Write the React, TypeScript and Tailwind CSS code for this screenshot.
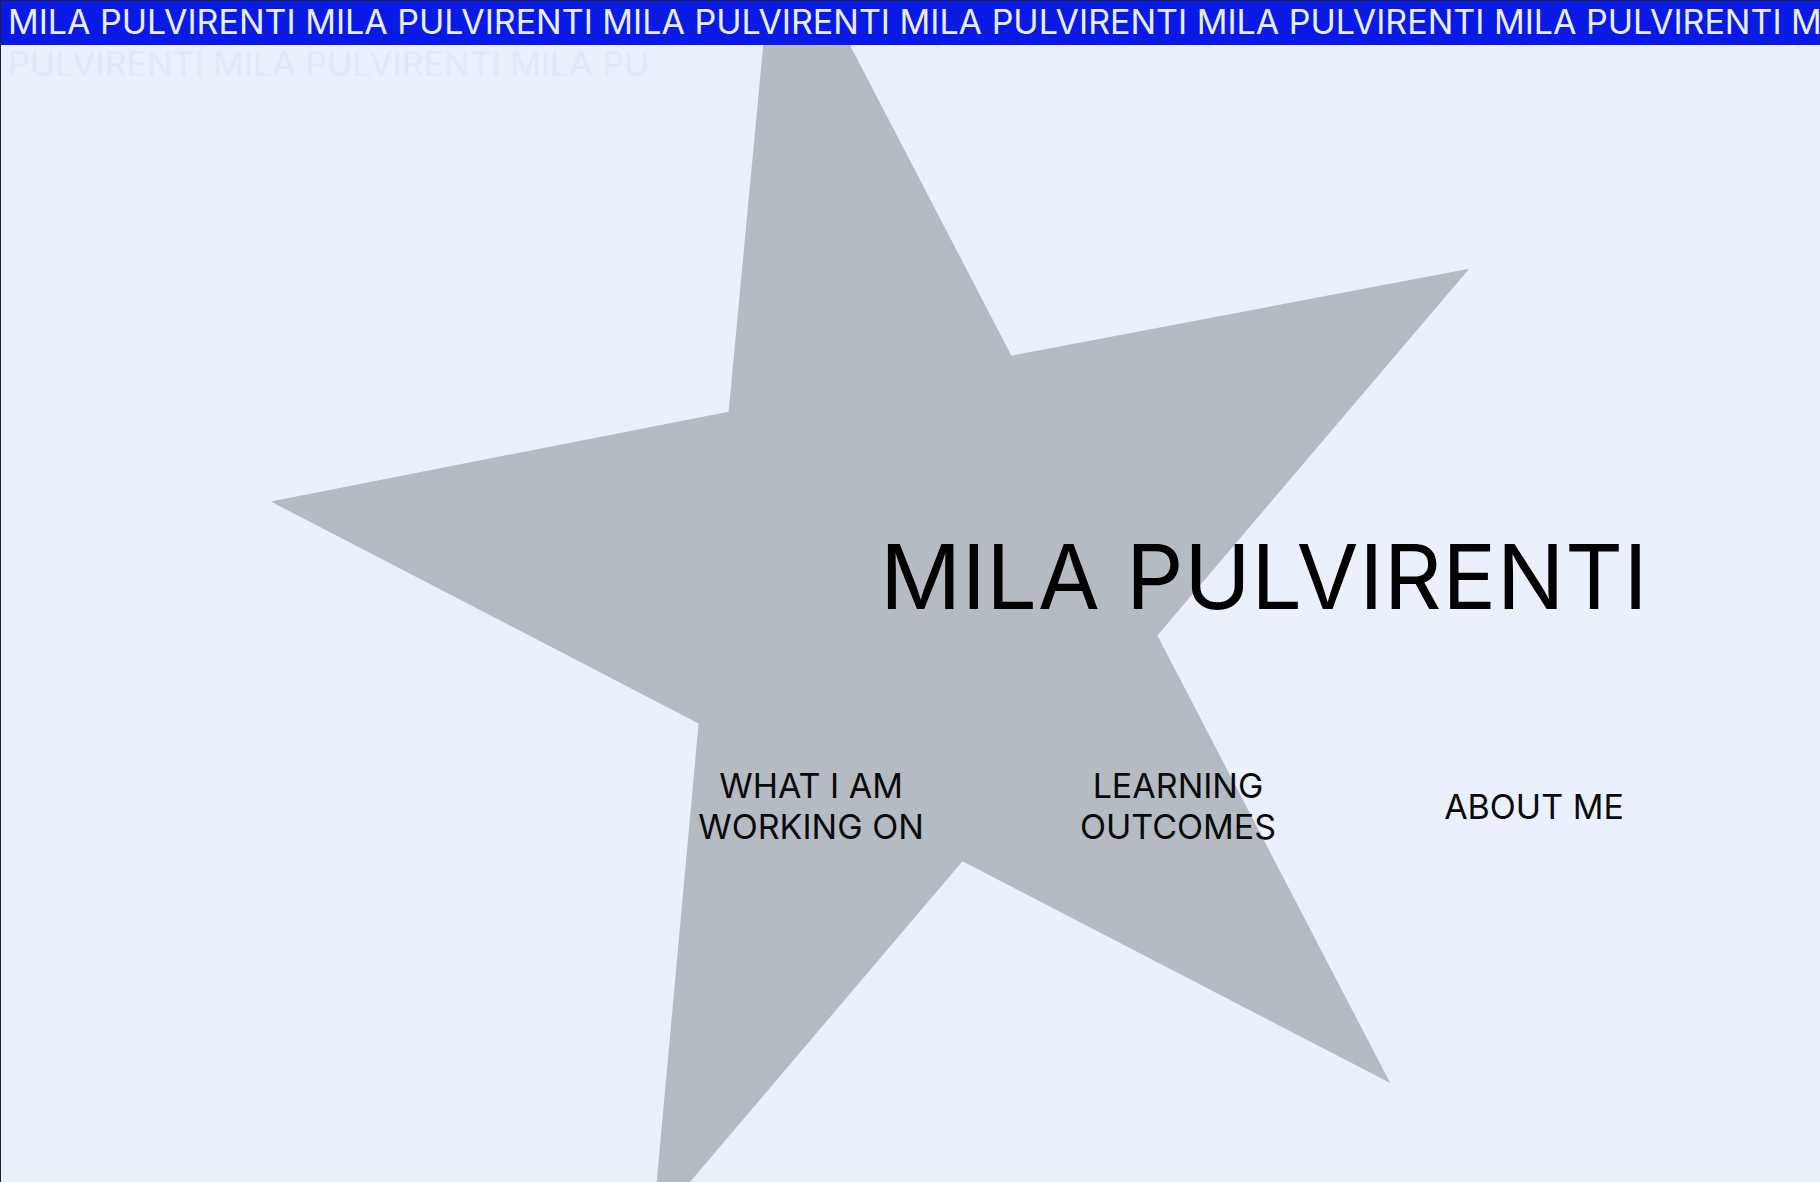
const STAR = "776,-97 1011,355 1469,268 1157,635 1390,1083 962,861 652,1226 698,723 270,501 728,411";

const navItems = [
  ["WHAT I AM", "WORKING ON"],
  ["LEARNING", "OUTCOMES"],
  ["ABOUT ME"],
];

export default function App() {
  const repeated = Array(8).fill("MILA PULVIRENTI").join(" ");

  return (
    <div
      className="relative h-[1182px] w-full overflow-hidden border-l border-t border-[#1e2130] bg-[#eaf0fc]"
      style={{ fontFamily: "Inter, 'Noto Sans', sans-serif" }}
    >
      {/* star behind everything */}
      <svg
        className="absolute inset-0 h-full w-full"
        viewBox="0 0 1820 1182"
        preserveAspectRatio="none"
      >
        <polygon points={STAR} fill="#b5bbc3" />
      </svg>

      {/* marquee bar */}
      <div className="relative z-10">
        <div className="h-[44px] overflow-hidden bg-[#0a1ae6]">
          <p className="whitespace-nowrap pl-[7px] text-[34px] leading-[42px] text-[#e9eefc]">
            {repeated}
          </p>
        </div>
        <p className="-mt-[2px] whitespace-nowrap pl-[7px] text-[34px] leading-[42px] text-[#e2e8f9]">
          PULVIRENTI MILA PULVIRENTI MILA PU
        </p>
      </div>

      {/* title + nav */}
      <div className="relative z-10 mt-[447px]">
        <h1 className="pl-[879px] text-[90px] font-normal leading-none tracking-[0.005em] text-black">
          MILA PULVIRENTI
        </h1>
        <nav className="mt-[143px] ml-[630px] grid w-[1072px] grid-cols-[360px_374px_338px] items-center">
          {navItems.map((lines) => (
            <a
              key={lines.join(" ")}
              href="#"
              className="text-center text-[34px] leading-[41px] text-[#0a0a0a]"
            >
              {lines.map((l) => (
                <span key={l} className="block">
                  {l}
                </span>
              ))}
            </a>
          ))}
        </nav>
      </div>
    </div>
  );
}
